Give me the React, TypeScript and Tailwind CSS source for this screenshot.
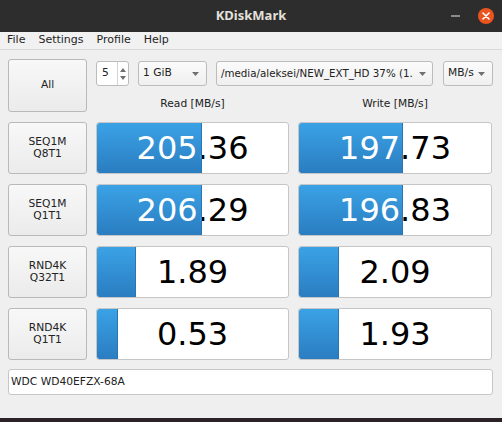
import React from "react";

const rows = [
  { l1: "SEQ1M", l2: "Q8T1", r: "205.36", rf: 106, w: "197.73", wf: 105 },
  { l1: "SEQ1M", l2: "Q1T1", r: "206.29", rf: 106, w: "196.83", wf: 105 },
  { l1: "RND4K", l2: "Q32T1", r: "1.89", rf: 40, w: "2.09", wf: 41 },
  { l1: "RND4K", l2: "Q1T1", r: "0.53", rf: 22, w: "1.93", wf: 41 },
];

function Bar({ value, fill, width }: { value: string; fill: number; width: number }) {
  const inner = width - 2;
  return (
    <div
      className="relative h-[52px] bg-white border border-[#c6c6c6] rounded-[3px] overflow-hidden"
      style={{ width }}
    >
      <div className="absolute inset-0 flex items-center justify-center text-[32px] text-black leading-none">
        {value}
      </div>
      <div
        className="absolute top-0 bottom-0 left-0 overflow-hidden rounded-l-[2px] bg-gradient-to-b from-[#3ba2e6] to-[#2a7dc0] border-r border-[#2a76b3]"
        style={{ width: fill - 1 }}
      >
        <div
          className="absolute top-0 bottom-0 left-0 flex items-center justify-center text-[32px] text-white leading-none"
          style={{ width: inner }}
        >
          {value}
        </div>
      </div>
    </div>
  );
}

function Arrow() {
  return (
    <svg width="7" height="4" viewBox="0 0 7 4" className="shrink-0">
      <path d="M0 0 L7 0 L3.5 4 Z" fill="#707070" />
    </svg>
  );
}

export default function App() {
  return (
    <div className="w-[502px] h-[422px] bg-[#2a2226] font-['DejaVu_Sans',sans-serif] overflow-hidden">
      {/* Title bar */}
      <div className="relative h-[32px] bg-[#2d2d2d] flex items-center justify-center">
        <span className="font-['Noto_Sans',sans-serif] font-bold text-[13px] text-[#e4e1dc]">KDiskMark</span>
        <div className="absolute right-[8px] top-[8px] flex items-center gap-[18px]">
          <div className="w-[9px] h-[2px] bg-[#8a8a8a]" />
          <div className="w-[16px] h-[16px] rounded-full bg-[#e9541f] flex items-center justify-center">
            <svg width="8" height="8" viewBox="0 0 8 8">
              <path d="M1 1 L7 7 M7 1 L1 7" stroke="white" strokeWidth="1.6" strokeLinecap="round" />
            </svg>
          </div>
        </div>
      </div>
      {/* Window body */}
      <div className="h-[386px] bg-[#efefef] flex flex-col">
        {/* Menu bar */}
        <div className="h-[18px] flex items-center gap-[13px] pl-[7px] text-[11px] text-[#1e1e1e] border-b border-[#d9d9d9] bg-[#f1f1f1]">
          <span>File</span>
          <span>Settings</span>
          <span>Profile</span>
          <span>Help</span>
        </div>
        <div className="pl-[8px] pr-[9px] pt-[9px] flex flex-col gap-[10px]">
          {/* Header row */}
          <div className="flex gap-[9px]">
            <button className="w-[79px] h-[53px] rounded-[3px] border border-[#b9b9b9] bg-gradient-to-b from-[#f8f8f8] to-[#ebebeb] text-[10.7px] text-[#222]">
              All
            </button>
            <div className="flex flex-col">
              <div className="flex items-center gap-[9px] mt-[2px] h-[25px]">
                <div className="w-[33px] h-[25px] bg-white border border-[#bcbcbc] rounded-[3px] flex items-center">
                  <span className="pl-[5px] text-[10.7px] text-[#222] flex-1">5</span>
                  <div className="w-[11px] h-full border-l border-[#d4d4d4] flex flex-col items-center justify-center gap-[4px]">
                    <svg width="6" height="4" viewBox="0 0 6 4"><path d="M0 4 L6 4 L3 0 Z" fill="#6f6f6f" /></svg>
                    <svg width="6" height="4" viewBox="0 0 6 4"><path d="M0 0 L6 0 L3 4 Z" fill="#6f6f6f" /></svg>
                  </div>
                </div>
                <div className="w-[69px] h-[25px] border border-[#bcbcbc] rounded-[3px] bg-gradient-to-b from-[#fbfbfb] to-[#efefef] flex items-center pl-[4px] pr-[7px] text-[10.7px] text-[#222]">
                  <span className="flex-1">1 GiB</span>
                  <Arrow />
                </div>
                <div className="w-[217px] h-[25px] border border-[#bcbcbc] rounded-[3px] bg-gradient-to-b from-[#fbfbfb] to-[#efefef] flex items-center pl-[4px] pr-[6px] text-[10.3px] text-[#222]">
                  <span className="flex-1 whitespace-nowrap">/media/aleksei/NEW_EXT_HD 37% (1.</span>
                  <Arrow />
                </div>
                <div className="w-[50px] h-[25px] ml-[1px] border border-[#bcbcbc] rounded-[3px] bg-gradient-to-b from-[#fbfbfb] to-[#efefef] flex items-center pl-[4px] pr-[7px] text-[10.7px] text-[#222]">
                  <span className="flex-1">MB/s</span>
                  <Arrow />
                </div>
              </div>
              <div className="flex gap-[9px] mt-[10px] text-[10.7px] text-[#222]">
                <div className="w-[193px] text-center">Read [MB/s]</div>
                <div className="w-[194px] text-center">Write [MB/s]</div>
              </div>
            </div>
          </div>
          {/* Result rows */}
          {rows.map((r, i) => (
            <div key={i} className="flex gap-[9px]">
              <button className="w-[79px] h-[52px] rounded-[3px] border border-[#b9b9b9] bg-gradient-to-b from-[#f8f8f8] to-[#ebebeb] text-[10.7px] leading-[12px] text-[#222] flex flex-col items-center justify-center">
                <span>{r.l1}</span>
                <span>{r.l2}</span>
              </button>
              <Bar value={r.r} fill={r.rf} width={193} />
              <Bar value={r.w} fill={r.wf} width={194} />
            </div>
          ))}
          {/* Device */}
          <div className="h-[26px] w-[485px] -mt-[1px] bg-white border border-[#c6c6c6] rounded-[3px] flex items-center pl-[2px] text-[10.7px] text-[#222]">
            WDC WD40EFZX-68A
          </div>
        </div>
      </div>
    </div>
  );
}
